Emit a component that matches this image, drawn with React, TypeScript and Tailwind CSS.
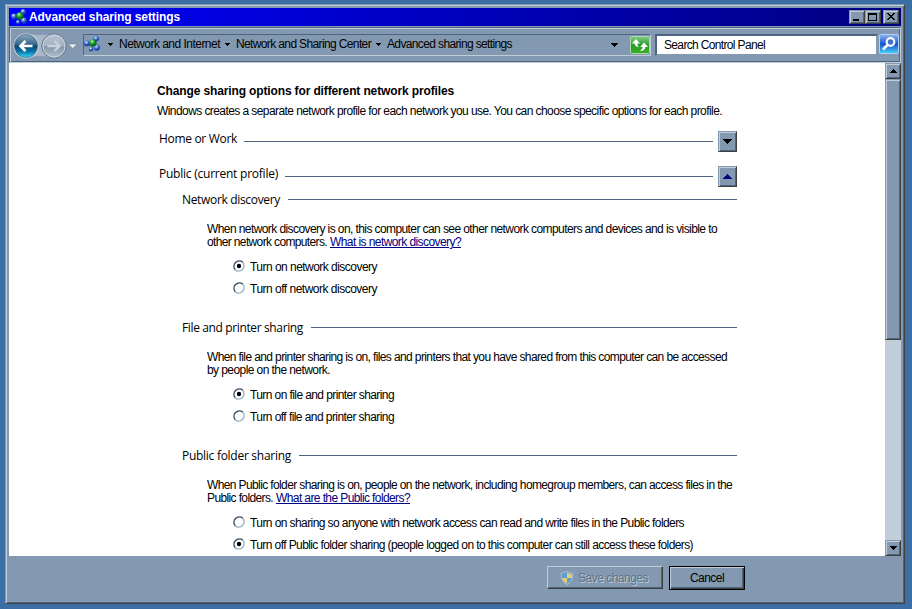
import { useLayoutEffect, useRef, useState } from "react";

/** Text run whose tracking is adjusted so that it fills exactly `w` pixels. */
function T({ w, children, className = "" }: { w: number; children: string; className?: string }) {
  const ref = useRef<HTMLSpanElement>(null);
  const [spacing, setSpacing] = useState(0);
  useLayoutEffect(() => {
    const el = ref.current;
    if (el) setSpacing((w - el.getBoundingClientRect().width) / children.length);
  }, [w, children]);
  return (
    <span ref={ref} className={`inline-block shrink-0 whitespace-pre ${className}`} style={{ letterSpacing: `${spacing}px` }}>
      {children}
    </span>
  );
}

const raised =
  "border border-t-[#8399b1] border-l-[#8399b1] border-r-[#404040] border-b-[#404040] bg-[#8399b1] shadow-[inset_1px_1px_0_#c1cdd9,inset_-1px_-1px_0_#4d6580]";

function Triangle({ up = false, small = false, color = "#000" }: { up?: boolean; small?: boolean; color?: string }) {
  const n = small ? 3 : 4;
  const rows = Array.from({ length: n }, (_, i) => i);
  return (
    <svg width={n * 2 - 1} height={n} className="block shrink-0" shapeRendering="crispEdges">
      {rows.map((i) => (
        <rect key={i} x={i} y={up ? n - 1 - i : i} width={(n - i) * 2 - 1} height={1} fill={color} />
      ))}
    </svg>
  );
}

function WideTriangle({ up = false, color }: { up?: boolean; color: string }) {
  return (
    <svg width="9" height="5" className="block" shapeRendering="crispEdges">
      {[0, 1, 2, 3, 4].map((i) => (
        <rect key={i} x={i} y={up ? 4 - i : i} width={9 - i * 2} height={1} fill={color} />
      ))}
    </svg>
  );
}

function NetworkIcon() {
  return (
    <svg width="16" height="16" viewBox="0 0 16 16" className="block shrink-0">
      <defs>
        <radialGradient id="blueBall" cx="40%" cy="30%">
          <stop offset="0" stopColor="#e0edff" />
          <stop offset=".45" stopColor="#6e98e6" />
          <stop offset="1" stopColor="#1d3fae" />
        </radialGradient>
        <radialGradient id="greenBall" cx="40%" cy="30%">
          <stop offset="0" stopColor="#d8ffd0" />
          <stop offset=".45" stopColor="#35b53c" />
          <stop offset="1" stopColor="#0b6b20" />
        </radialGradient>
      </defs>
      <circle cx="12.2" cy="2.8" r="2.7" fill="url(#blueBall)" />
      <circle cx="2.9" cy="7.4" r="2.9" fill="url(#blueBall)" />
      <circle cx="7" cy="13.2" r="2.2" fill="url(#blueBall)" />
      <circle cx="12.8" cy="11.6" r="3.1" fill="url(#blueBall)" />
      <circle cx="8.8" cy="7" r="3.8" fill="url(#greenBall)" />
    </svg>
  );
}

function NavButtons() {
  return (
    <svg width="68" height="28" viewBox="0 0 68 28" className="block shrink-0">
      <defs>
        <linearGradient id="back" x1="0" y1="0" x2="0" y2="1">
          <stop offset="0" stopColor="#8fa9bf" />
          <stop offset=".45" stopColor="#2f6489" />
          <stop offset=".5" stopColor="#06456f" />
          <stop offset=".75" stopColor="#0879ae" />
          <stop offset="1" stopColor="#35dcf8" />
        </linearGradient>
        <linearGradient id="fwd" x1="0" y1="0" x2="0" y2="1">
          <stop offset="0" stopColor="#b8c5d2" />
          <stop offset=".48" stopColor="#a3b2c2" />
          <stop offset=".52" stopColor="#8797aa" />
          <stop offset="1" stopColor="#b3c1cf" />
        </linearGradient>
      </defs>
      <path d="M14 2Q28 4 42 2V26Q28 22 14 26Z" fill="#a9b8c8" />
      <circle cx="14" cy="14" r="12.5" fill="#dbe4ec" />
      <circle cx="14" cy="14" r="11.5" fill="url(#back)" stroke="#355a78" strokeWidth=".7" />
      <path d="M20.5 14H9M13.5 9 8.5 14l5 5" fill="none" stroke="#fff" strokeWidth="2.7" />
      <circle cx="42" cy="14" r="12.2" fill="url(#fwd)" stroke="#65788d" strokeWidth="1" />
      <circle cx="42" cy="14" r="11" fill="none" stroke="#cbd5df" strokeWidth="1" />
      <path d="M35.5 14H47M42.5 9l5 5-5 5" fill="none" stroke="#c8d2dd" strokeWidth="2.4" />
      <path d="M56.500 12h8.500l-4.200 4.500Z" fill="#f2f2f2" stroke="#65778b" strokeWidth=".5" />
    </svg>
  );
}

function Radio({ on }: { on: boolean }) {
  return (
    <svg width="12" height="12" viewBox="0 0 12 12" className="block shrink-0">
      <circle cx="6" cy="6" r="5.3" fill="#fff" />
      <path d="M2.2 9.8A5.4 5.4 0 0 1 9.8 2.2" fill="none" stroke="#3f5368" strokeWidth="1.5" />
      <path d="M9.8 2.2A5.4 5.4 0 0 1 2.2 9.8" fill="none" stroke="#9db0c4" strokeWidth="1.5" />
      {on && <circle cx="6" cy="6" r="2.2" fill="#000" />}
    </svg>
  );
}

function Profile({ name, w, open = false }: { name: string; w: number; open?: boolean }) {
  return (
    <div className="ml-[2px] flex h-[21px] w-[578px] items-start">
      <T w={w} className="-mt-[2px] font-['Open_Sans',sans-serif] text-[12px] leading-[19px]">{name}</T>
      <div className="mt-[10px] mr-[5px] ml-[7px] h-px flex-1 bg-[#4d6580]" />
      <button className={`flex h-[21px] w-[19px] items-center justify-center ${raised}`}>
        <WideTriangle up={open} color={open ? "#000080" : "#000000"} />
      </button>
    </div>
  );
}

type Line = { text: string; w: number; link?: string; linkW?: number };
type Option = { text: string; w: number; on: boolean };

function Section({ title, w, lines, options }: { title: string; w: number; lines: Line[]; options: Option[] }) {
  return (
    <section className="ml-[25px] h-[128px] w-[555px]">
      <div className="flex h-[18px] items-start">
        <T w={w} className="font-['Open_Sans',sans-serif] text-[12px] leading-[19px]">{title}</T>
        <div className="mt-[9px] ml-[8px] h-px flex-1 bg-[#4d6580]" />
      </div>
      <div className="mt-[14px] ml-[25px]">
        {lines.map((l) => (
          <div key={l.text} className="flex h-[13px] gap-[3px]">
            <T w={l.w}>{l.text}</T>
            {l.link && <T w={l.linkW!} className="text-[#000080] underline">{l.link}</T>}
          </div>
        ))}
      </div>
      <div className="mt-[12px] ml-[51px] flex flex-col gap-2">
        {options.map((o) => (
          <label key={o.text} className="flex h-[14px] gap-[5px]">
            <Radio on={o.on} />
            <T w={o.w}>{o.text}</T>
          </label>
        ))}
      </div>
    </section>
  );
}

const sections = [
  {
    title: "Network discovery", w: 98,
    lines: [
      { text: "When network discovery is on, this computer can see other network computers and devices and is visible to", w: 510 },
      { text: "other network computers.", w: 120, link: "What is network discovery?", linkW: 131 },
    ],
    options: [
      { text: "Turn on network discovery", w: 127, on: true },
      { text: "Turn off network discovery", w: 127, on: false },
    ],
  },
  {
    title: "File and printer sharing", w: 121,
    lines: [
      { text: "When file and printer sharing is on, files and printers that you have shared from this computer can be accessed", w: 520 },
      { text: "by people on the network.", w: 123 },
    ],
    options: [
      { text: "Turn on file and printer sharing", w: 144, on: true },
      { text: "Turn off file and printer sharing", w: 144, on: false },
    ],
  },
  {
    title: "Public folder sharing", w: 109,
    lines: [
      { text: "When Public folder sharing is on, people on the network, including homegroup members, can access files in the", w: 525 },
      { text: "Public folders.", w: 66, link: "What are the Public folders?", linkW: 134 },
    ],
    options: [
      { text: "Turn on sharing so anyone with network access can read and write files in the Public folders", w: 434, on: false },
      { text: "Turn off Public folder sharing (people logged on to this computer can still access these folders)", w: 443, on: true },
    ],
  },
];

function TitleBar() {
  const btn = `flex h-[14px] w-[16px] items-center justify-center ${raised}`;
  return (
    <header className="flex h-[18px] items-center bg-linear-to-r from-[#0000ff] to-[#000080] pr-[2px] pl-[2px]">
      <NetworkIcon />
      <T w={151} className="ml-[2px] text-[12px] font-bold text-white">Advanced sharing settings</T>
      <div className="ml-auto flex">
        <button className={btn}>
          <svg width="12" height="10" shapeRendering="crispEdges"><path d="M2 7h6v2H2z" /></svg>
        </button>
        <button className={btn}>
          <svg width="12" height="10" shapeRendering="crispEdges"><path d="M1.5 1.5h8v7h-8zM1 2.5h9" fill="none" stroke="#000" /></svg>
        </button>
        <button className={`ml-[2px] ${btn}`}>
          <svg width="12" height="10" shapeRendering="crispEdges">
            {[0, 1, 2, 3, 4, 5, 6].map((i) => (
              <path key={i} d={`M${2 + i} ${1 + i}h2v1h-2zM${8 - i} ${1 + i}h2v1h-2z`} />
            ))}
          </svg>
        </button>
      </div>
    </header>
  );
}

function Toolbar() {
  return (
    <nav className="mt-px flex h-[36px] border border-[#4d6580] border-b-[#c1cdd9] border-r-[#c1cdd9] shadow-[inset_1px_1px_0_#c1cdd9,inset_-1px_-1px_0_#4d6580]">
      <div className="mt-[4px] ml-[2px] w-[71px]"><NavButtons /></div>
      <div className="mt-[6px] flex h-[22px] w-[568px] items-center border border-t-[#4d6580] border-l-[#4d6580] border-r-[#c1cdd9] border-b-[#c1cdd9]">
        <div className="flex items-center pb-[2px]">
          <NetworkIcon />
          <span className="ml-[8px]"><Triangle small /></span>
          <T w={101} className="ml-[6px]">Network and Internet</T>
          <span className="ml-[5px]"><Triangle small /></span>
          <T w={135} className="ml-[6px]">Network and Sharing Center</T>
          <span className="ml-[5px]"><Triangle small /></span>
          <T w={125} className="ml-[6px]">Advanced sharing settings</T>
        </div>
        <span className="ml-auto"><Triangle /></span>
        <svg width="20" height="18" viewBox="0 0 20 18" className="ml-[12px] block shrink-0">
          <defs>
            <linearGradient id="refresh" x1="0" y1="0" x2="0" y2="1">
              <stop offset="0" stopColor="#83ce85" />
              <stop offset=".5" stopColor="#2b9d2c" />
              <stop offset="1" stopColor="#3caf24" />
            </linearGradient>
          </defs>
          <rect x=".5" y=".5" width="19" height="17" rx="1" fill="url(#refresh)" stroke="#a9d7b1" />
          <path d="M6 3 2 7.500H4.600Q5 10.800 9 11.200 7.300 10 7.300 7.500H10ZM14 6.500 10.200 11H12.700Q12.500 13.500 10 15 14.800 15 15.400 11H18Z" fill="#fff" />
        </svg>
      </div>
      <div className="mt-[6px] ml-[4px] flex h-[22px] w-[223px] items-center border-2 border-t-[#4d6580] border-l-[#4d6580] border-r-[#8399b1] border-b-[#8399b1] bg-white pl-[7px]">
        <T w={101}>Search Control Panel</T>
      </div>
      <svg width="20" height="20" viewBox="0 0 20 20" className="mt-[6px] ml-px block shrink-0">
        <defs>
          <linearGradient id="search" x1="0" y1="0" x2="0" y2="1">
            <stop offset="0" stopColor="#8fb5ef" />
            <stop offset=".45" stopColor="#2560d4" />
            <stop offset=".5" stopColor="#1452c9" />
            <stop offset="1" stopColor="#4ad4fa" />
          </linearGradient>
        </defs>
        <rect x=".5" y=".5" width="19" height="19" rx="1" fill="url(#search)" stroke="#b2d2f4" />
        <circle cx="11.500" cy="8" r="3.800" fill="#4472cc" stroke="#f4f7fb" strokeWidth="2.200" />
        <path d="m8.500 11-4.500 4.500" stroke="#f4f7fb" strokeWidth="2.800" />
      </svg>
    </nav>
  );
}

function Shield() {
  return (
    <svg width="14" height="14" viewBox="0 0 14 14" className="block">
      <path d="M7 .5Q10 2 13 2q.5 8-6 11.500Q.5 10 1 2 4 2 7 .5Z" fill="#5d9fd4" stroke="#b1bcc7" />
      <path d="M7 1.500Q10 3 12 3v4H7ZM2 7h5v5.500Q3 10.500 2 7Z" fill="#e1cf70" />
    </svg>
  );
}

export default function App() {
  return (
    <div className="h-[609px] w-[912px] overflow-hidden bg-[#3a6ea5] pt-[4px] pl-[5px] font-['Liberation_Sans',Arial,sans-serif] text-[12px] leading-[14px] text-black">
      <div className={`flex h-[600px] w-[900px] flex-col px-[3px] pt-[3px] ${raised}`}>
        <TitleBar />
        <Toolbar />
        <div className="flex h-[493px]">
          <main className="h-[493px] w-[876px] overflow-hidden bg-white pt-[21px] pl-[148px]">
            <div className="h-[20px]"><T w={297} className="font-bold">Change sharing options for different network profiles</T></div>
            <div className="h-[27px]">
              <T w={565}>Windows creates a separate network profile for each network you use. You can choose specific options for each profile.</T>
            </div>
            <div className="mb-[3px] flex flex-col gap-[14px]">
              <Profile name="Home or Work" w={78} />
              <Profile name="Public (current profile)" w={119} open />
            </div>
            {sections.map((s) => <Section key={s.title} {...s} />)}
          </main>
          <div className="flex w-[16px] flex-col bg-[#c1cdd9]">
            <button className={`flex h-[16px] items-center justify-center ${raised}`}><Triangle up /></button>
            <div className={`h-[261px] ${raised}`} />
            <button className={`mt-auto flex h-[16px] items-center justify-center ${raised}`}><Triangle /></button>
          </div>
        </div>
        <footer className="flex items-start gap-[6px] pt-[10px] pl-[538px]">
          <button className="flex h-[23px] w-[116px] items-center border border-t-[#c1cdd9] border-l-[#c1cdd9] border-r-[#404040] border-b-[#404040] pl-[12px] text-[#5d738b] shadow-[inset_-1px_-1px_0_#4d6580]">
            <Shield />
            <T w={70} className="ml-[4px] [text-shadow:1px_1px_0_#c1cdd9]">Save changes</T>
          </button>
          <button className="flex h-[24px] w-[76px] items-center justify-center border border-black shadow-[inset_1px_1px_0_#c1cdd9,inset_-1px_-1px_0_#404040,inset_-2px_-2px_0_#4d6580]">
            <T w={34}>Cancel</T>
          </button>
        </footer>
      </div>
    </div>
  );
}
